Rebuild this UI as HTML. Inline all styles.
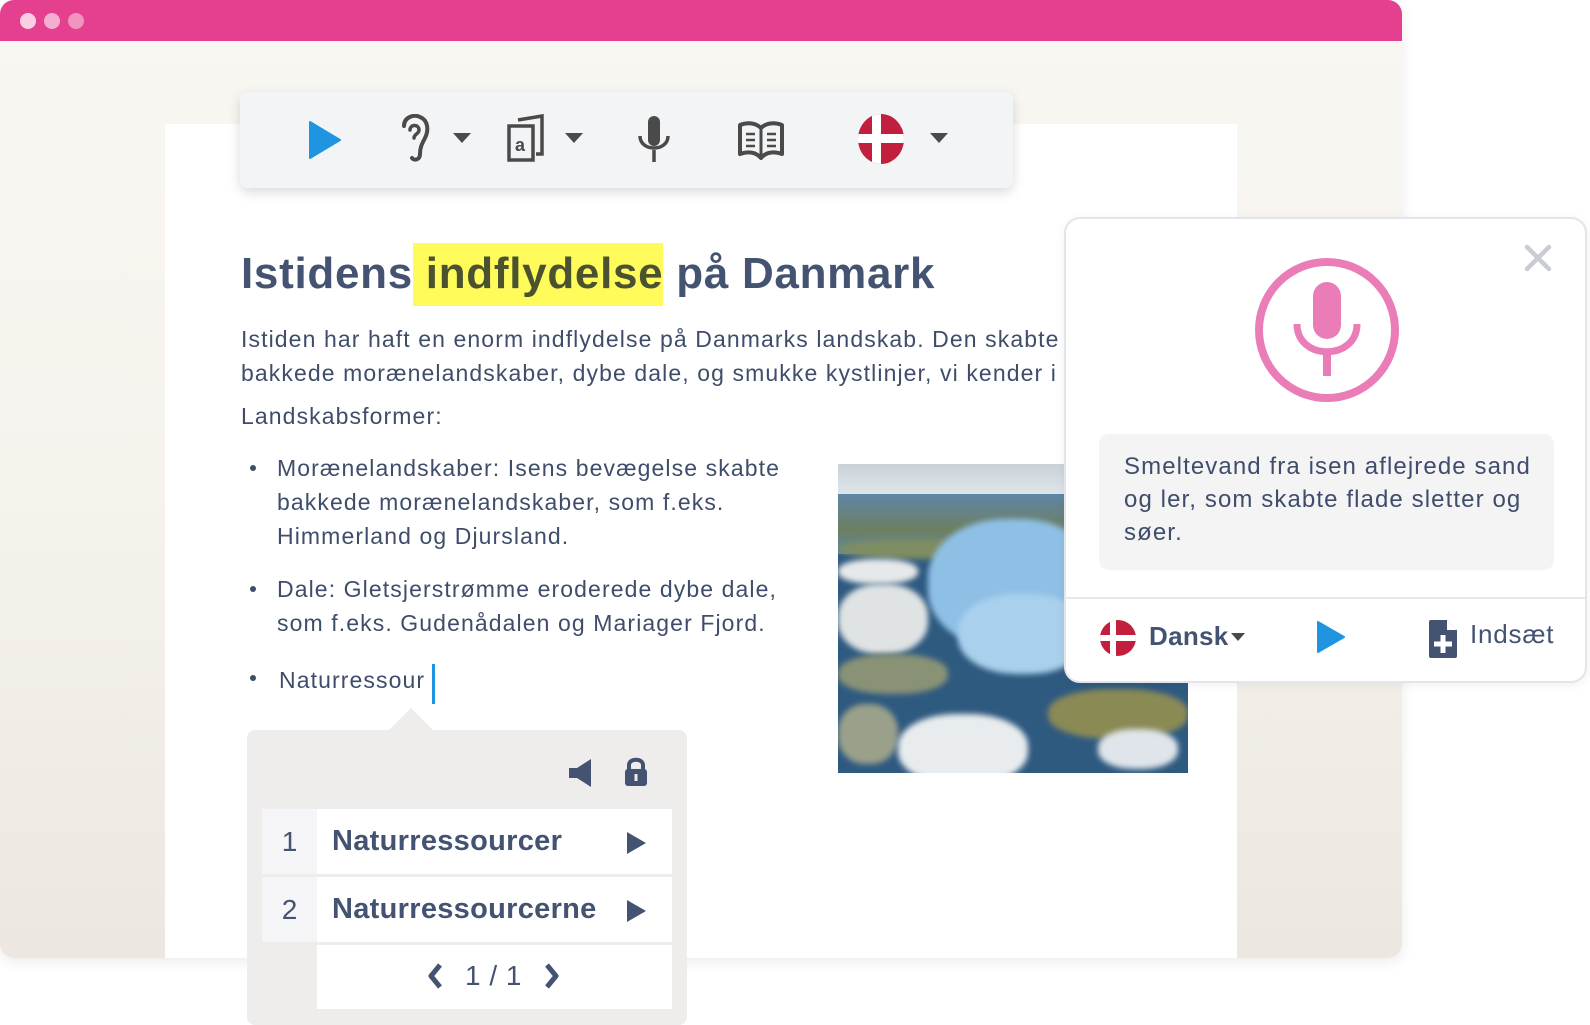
<!DOCTYPE html>
<html><head><meta charset="utf-8">
<style>
*{margin:0;padding:0;box-sizing:border-box}
body{width:1590px;height:1025px;background:#fff;position:relative;overflow:hidden;font-family:"Liberation Sans",sans-serif;color:#3f4d6b}
.win{position:absolute;left:0;top:0;width:1402px;height:958px;border-radius:14px;overflow:hidden;background:linear-gradient(#f9f7f2 0%,#f6f3ed 50%,#ece7e0 100%);box-shadow:0 4px 14px rgba(0,0,0,.08)}
.bar{position:absolute;left:0;top:0;right:0;height:41px;background:#e5408f}
.dot{position:absolute;top:13px;width:16px;height:16px;border-radius:50%}
.page{position:absolute;left:165px;top:124px;width:1072px;height:834px;background:#fff}
.tb{position:absolute;left:240px;top:92px;width:773px;height:96px;background:#f3f4f6;border-radius:8px;box-shadow:0 4px 12px rgba(0,0,0,.15)}
.abs{position:absolute}
h1{position:absolute;left:241px;top:249px;font-size:44px;font-weight:bold;color:#445371;white-space:nowrap;letter-spacing:0.7px}
.hl{background:#fffb5a;color:#4a5230;padding:6px 0 8px}
.t{position:absolute;font-size:23px;white-space:nowrap;color:#3f4d6b;letter-spacing:1.1px}
.bul{position:absolute;width:6px;height:6px;border-radius:50%;background:#3f4d6b}
.panel{position:absolute;left:1064px;top:217px;width:523px;height:466px;background:#fff;border:2px solid #e2e5ec;border-radius:16px;box-shadow:0 2px 10px rgba(0,0,0,.06)}
.pop{position:absolute;left:247px;top:730px;width:440px;height:295px;background:#efecec;border-radius:8px}
.row{position:absolute;left:15px;width:410px;height:65px;background:#fff}
.num{position:absolute;left:0;top:0;width:55px;height:65px;background:#f5f4f6;font-size:28px;color:#445371;text-align:center;line-height:65px}
.word{position:absolute;left:70px;top:0;line-height:65px;font-size:29px;font-weight:bold;color:#445371;letter-spacing:0.3px}
.b{position:absolute;border-radius:45%;filter:blur(3px)}
</style></head><body>
<div class="win">
 <div class="bar"></div>
 <div class="dot" style="left:20px;background:#f9cfe4"></div>
 <div class="dot" style="left:44px;background:#f3aed0"></div>
 <div class="dot" style="left:68px;background:#ef95c0"></div>
 <div class="page"></div>
</div>

<div class="tb">
 <svg class="abs" style="left:68px;top:28px" width="34" height="40" viewBox="0 0 34 40"><path d="M2 2 L32 20 L2 38 Z" fill="#1f94e0" stroke="#1f94e0" stroke-width="2" stroke-linejoin="round"/></svg>
 <svg class="abs" style="left:160px;top:22px" width="40" height="50" viewBox="0 0 40 50"><path d="M4 12 C4 3 14 0 20 3 C28 6 29 16 25 24 C22 30 20 33 20 40 C20 46 14 47 12 44" fill="none" stroke="#4a4a4a" stroke-width="4" stroke-linecap="round"/><path d="M10 16 C10 10 19 10 19 16 C19 20 14 20 14 24" fill="none" stroke="#4a4a4a" stroke-width="3.5" stroke-linecap="round"/></svg>
 <svg class="abs" style="left:212px;top:40px" width="20" height="12"><path d="M1 1 L19 1 L10 11 Z" fill="#4a4a4a"/></svg>
 <svg class="abs" style="left:266px;top:22px" width="40" height="50" viewBox="0 0 40 50"><path d="M12 6 L36 2 L36 40 L30 40" fill="none" stroke="#4a4a4a" stroke-width="3.5"/><rect x="3" y="12" width="24" height="34" fill="#f3f4f6" stroke="#4a4a4a" stroke-width="3.5"/><text x="9" y="37" font-family="Liberation Sans" font-size="18" font-weight="bold" fill="#4a4a4a">a</text></svg>
 <svg class="abs" style="left:324px;top:40px" width="20" height="12"><path d="M1 1 L19 1 L10 11 Z" fill="#4a4a4a"/></svg>
 <svg class="abs" style="left:396px;top:22px" width="36" height="50" viewBox="0 0 36 50"><rect x="12" y="2" width="12" height="30" rx="6" fill="#4a4a4a"/><path d="M4 22 C4 38 32 38 32 22" fill="none" stroke="#4a4a4a" stroke-width="3.5"/><path d="M18 36 L18 48" stroke="#4a4a4a" stroke-width="3.5"/></svg>
 <svg class="abs" style="left:497px;top:28px" width="48" height="40" viewBox="0 0 48 40"><path d="M3 5 C11 2 19 3 24 8 C29 3 37 2 45 5 L45 34 C37 31 29 32 24 38 C19 32 11 31 3 34 Z" fill="none" stroke="#4a4a4a" stroke-width="4" stroke-linejoin="round"/><path d="M24 8 L24 37" stroke="#4a4a4a" stroke-width="3"/><path d="M9 14h9M9 20h9M9 26h9M30 14h9M30 20h9M30 26h9" stroke="#4a4a4a" stroke-width="2.5"/></svg>
 <svg class="abs" style="left:616px;top:22px" width="50" height="50" viewBox="0 0 50 50"><defs><clipPath id="c1"><ellipse cx="25" cy="25" rx="23" ry="25"/></clipPath></defs><g clip-path="url(#c1)"><rect width="50" height="50" fill="#c21f3e"/><rect x="0" y="20" width="50" height="9" fill="#fff"/><rect x="16" y="0" width="9" height="50" fill="#fff"/></g></svg>
 <svg class="abs" style="left:689px;top:40px" width="20" height="12"><path d="M1 1 L19 1 L10 11 Z" fill="#4a4a4a"/></svg>
</div>

<h1>Istidens<span class="hl"> indflydelse</span> på Danmark</h1>
<div class="t" style="left:241px;top:326px">Istiden har haft en enorm indflydelse på Danmarks landskab. Den skabte</div>
<div class="t" style="left:241px;top:360px">bakkede morænelandskaber, dybe dale, og smukke kystlinjer, vi kender i dag.</div>
<div class="t" style="left:241px;top:403px">Landskabsformer:</div>
<div class="bul" style="left:250px;top:465px"></div>
<div class="t" style="left:277px;top:455px">Morænelandskaber: Isens bevægelse skabte</div>
<div class="t" style="left:277px;top:489px">bakkede morænelandskaber, som f.eks.</div>
<div class="t" style="left:277px;top:523px">Himmerland og Djursland.</div>
<div class="bul" style="left:250px;top:586px"></div>
<div class="t" style="left:277px;top:576px">Dale: Gletsjerstrømme eroderede dybe dale,</div>
<div class="t" style="left:277px;top:610px">som f.eks. Gudenådalen og Mariager Fjord.</div>
<div class="bul" style="left:250px;top:675px"></div>
<div class="t" style="left:279px;top:667px">Naturressour</div>
<div class="abs" style="left:432px;top:664px;width:3px;height:40px;background:#1f94e0"></div>

<div class="abs" style="left:838px;top:464px;width:350px;height:309px;overflow:hidden;background:#2f5a80">
 <div class="abs" style="left:0;top:0;width:350px;height:30px;background:linear-gradient(#c9d2d8,#dfe6ea)"></div>
 <div class="abs" style="left:0;top:30px;width:350px;height:60px;background:linear-gradient(#5f86a8,#6d7f60 60%,#5d87a8)"></div>
 <div class="b" style="left:0;top:75px;width:170px;height:20px;background:#7e8d62"></div>
 <div class="b" style="left:0;top:95px;width:80px;height:25px;background:#e6e9ea"></div>
 <div class="b" style="left:90px;top:55px;width:170px;height:130px;background:#8ec0e6"></div>
 <div class="b" style="left:120px;top:130px;width:130px;height:80px;background:#a9d0ec"></div>
 <div class="b" style="left:240px;top:110px;width:110px;height:70px;background:#6d7b52"></div>
 <div class="b" style="left:0;top:120px;width:90px;height:70px;background:#dfe3e4"></div>
 <div class="b" style="left:0;top:190px;width:110px;height:40px;background:#8a9276"></div>
 <div class="b" style="left:0;top:240px;width:60px;height:60px;background:#9aa08a"></div>
 <div class="b" style="left:60px;top:250px;width:130px;height:70px;background:#e8ecee"></div>
 <div class="b" style="left:210px;top:225px;width:140px;height:50px;background:#8a8a55"></div>
 <div class="b" style="left:260px;top:265px;width:80px;height:40px;background:#dfe5ea"></div>
</div>

<div class="panel">
 <svg class="abs" style="left:457px;top:24px" width="30" height="30" viewBox="0 0 30 30"><path d="M4 4 L26 26 M26 4 L4 26" stroke="#c9cdd3" stroke-width="4.5" stroke-linecap="round"/></svg>
 <svg class="abs" style="left:188px;top:38px" width="146" height="146" viewBox="0 0 146 146"><circle cx="73" cy="73" r="68" fill="none" stroke="#ea7db7" stroke-width="8"/><rect x="59" y="25" width="28" height="57" rx="14" fill="#ea7db7"/><path d="M43 67 C43 104 103 104 103 67" fill="none" stroke="#ea7db7" stroke-width="7"/><path d="M73 92 L73 119" stroke="#ea7db7" stroke-width="8"/></svg>
 <div class="abs" style="left:33px;top:215px;width:455px;height:136px;background:#f4f4f5;border-radius:10px"></div>
 <div class="t" style="left:58px;top:231px;font-size:24px;line-height:33px;white-space:normal;width:435px;letter-spacing:1.1px">Smeltevand fra isen aflejrede sand og ler, som skabte flade sletter og søer.</div>
 <div class="abs" style="left:0;top:378px;width:519px;height:2px;background:#e5e8ee"></div>
 <svg class="abs" style="left:33px;top:400px" width="38" height="38" viewBox="0 0 38 38"><defs><clipPath id="c2"><circle cx="19" cy="19" r="18"/></clipPath></defs><g clip-path="url(#c2)"><rect width="38" height="38" fill="#c21f3e"/><rect x="0" y="16" width="38" height="6" fill="#fff"/><rect x="11" y="0" width="6" height="38" fill="#fff"/></g></svg>
 <div class="t" style="left:83px;top:402px;font-size:26px;font-weight:bold;color:#445371;letter-spacing:0.3px">Dansk</div>
 <svg class="abs" style="left:165px;top:414px" width="14" height="9"><path d="M0 0 L14 0 L7 8Z" fill="#4a4a4a"/></svg>
 <svg class="abs" style="left:250px;top:401px" width="30" height="34" viewBox="0 0 30 34"><path d="M2 2 L28 17 L2 32 Z" fill="#1f94e0" stroke="#1f94e0" stroke-width="2" stroke-linejoin="round"/></svg>
 <svg class="abs" style="left:362px;top:400px" width="30" height="40" viewBox="0 0 30 40"><path d="M3 1 L19 1 L29 11 L29 37 Q29 39 27 39 L3 39 Q1 39 1 37 L1 3 Q1 1 3 1Z" fill="#445371"/><path d="M19 1 L19 11 L29 11" fill="#fff"/><path d="M15 16 L15 34 M6 25 L24 25" stroke="#fff" stroke-width="5"/></svg>
 <div class="t" style="left:404px;top:400px;font-size:26px;color:#445371;letter-spacing:0.8px">Indsæt</div>
</div>

<div class="pop">
 <svg class="abs" style="left:140px;top:-22px" width="50" height="24"><path d="M0 24 L24 0 L48 24Z" fill="#efecec"/></svg>
 <svg class="abs" style="left:322px;top:28px" width="24" height="30" viewBox="0 0 24 30"><path d="M0 10 L8 10 L22 1 L22 29 L8 20 L0 20Z" fill="#445371"/></svg>
 <svg class="abs" style="left:377px;top:27px" width="24" height="30" viewBox="0 0 24 30"><path d="M5 13 L5 8 C5 1 19 1 19 8 L19 13" fill="none" stroke="#445371" stroke-width="4"/><rect x="1" y="12" width="22" height="17" rx="3" fill="#445371"/><rect x="10.5" y="17" width="3" height="7" fill="#efecec"/></svg>
 <div class="row" style="top:79px"><div class="num">1</div><div class="word">Naturressourcer</div><svg class="abs" style="left:365px;top:23px" width="20" height="22"><path d="M0 0 L19 11 L0 22Z" fill="#445371"/></svg></div>
 <div class="row" style="top:147px"><div class="num">2</div><div class="word">Naturressourcerne</div><svg class="abs" style="left:365px;top:23px" width="20" height="22"><path d="M0 0 L19 11 L0 22Z" fill="#445371"/></svg></div>
 <div class="abs" style="left:70px;top:215px;width:355px;height:64px;background:#fff"></div>
 <svg class="abs" style="left:179px;top:232px" width="18" height="28"><path d="M14 3 L5 14 L14 25" fill="none" stroke="#445371" stroke-width="5" stroke-linejoin="round"/></svg>
 <div class="t" style="left:218px;top:230px;font-size:28px;color:#445371;letter-spacing:0.5px">1 / 1</div>
 <svg class="abs" style="left:296px;top:232px" width="18" height="28"><path d="M4 3 L13 14 L4 25" fill="none" stroke="#445371" stroke-width="5" stroke-linejoin="round"/></svg>
</div>
</body></html>
